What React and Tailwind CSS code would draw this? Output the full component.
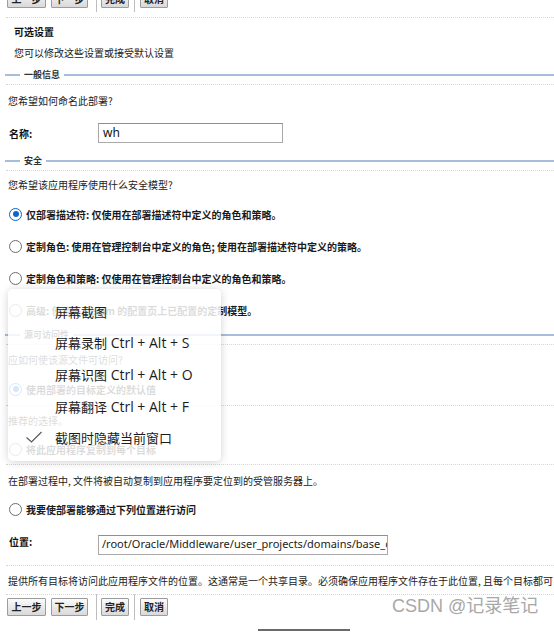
import React from "react";

const Dotted = () => (
  <div className="h-px ml-[6px] border-t border-dotted border-[#d6d6d6]" />
);

const Section = ({ title }) => (
  <div className="h-[18px] flex items-center">
    <div className="ml-[5px] w-[15px] h-[2px] bg-[#a7bddb]" />
    <span className="mx-[4px] text-[9px] font-bold text-[#333]">{title}</span>
    <div className="flex-1 h-[2px] bg-[#a7bddb]" />
  </div>
);

const Radio = ({ checked }) =>
  checked ? (
    <span className="w-[13px] h-[13px] rounded-full border-[1.5px] border-[#0a64d2] bg-white flex items-center justify-center shrink-0">
      <span className="w-[6px] h-[6px] rounded-full bg-[#0a64d2]" />
    </span>
  ) : (
    <span className="w-[13px] h-[13px] rounded-full border-[1.5px] border-[#6e6e6e] bg-white shrink-0" />
  );

const RadioRow = ({ h, checked, children }) => (
  <div className={`${h} flex items-center pl-[9px]`}>
    <Radio checked={checked} />
    <span className="ml-[4px] text-[10px] font-bold text-[#1a1a1a]">{children}</span>
  </div>
);

const Btn = ({ w, children }) => (
  <button className={`${w} h-[18px] border border-[#9c9c9c] rounded-[1px] bg-gradient-to-b from-[#fbfbfb] to-[#d9d9d9] text-[10px] font-bold text-[#222] flex items-center justify-center leading-none`}>
    {children}
  </button>
);

const Buttons = ({ cls }) => (
  <div className={`${cls} flex items-center pl-[7px]`}>
    <Btn w="w-[39px]">上一步</Btn>
    <div className="w-[5px]" />
    <Btn w="w-[37px]">下一步</Btn>
    <div className="w-[8px]" />
    <div className="w-[1px] h-[26px] bg-[#bdbdbd]" />
    <div className="w-[4px]" />
    <Btn w="w-[28px]">完成</Btn>
    <div className="w-[5px]" />
    <div className="w-[1px] h-[26px] bg-[#bdbdbd]" />
    <div className="w-[5px]" />
    <Btn w="w-[28px]">取消</Btn>
  </div>
);

const Text = ({ h, pl = "pl-[8px]", bold, children }) => (
  <div className={`${h} ${pl} flex items-center text-[10px] ${bold ? "font-bold text-[#111]" : "text-[#222]"}`}>
    {children}
  </div>
);

const MenuItem = ({ top, cjk, keys }) => (
  <div className={`absolute left-[47px] ${top} leading-[20px] flex items-baseline`}>
    <span className="text-[13px]">{cjk}</span>
    {keys && (
      <span className="text-[14px] font-['Open_Sans',sans-serif] whitespace-pre">{" " + keys}</span>
    )}
  </div>
);

export default function App() {
  return (
    <div className="relative w-[554px] h-[632px] overflow-hidden bg-white whitespace-nowrap font-['Noto_Sans_CJK_SC','Noto_Sans',sans-serif]">
      <Buttons cls="h-[18px] -mt-[10px]" />
      <div className="h-[9px]" />
      <Dotted />
      <Text h="h-[26px]" pl="pl-[14px]" bold>可选设置</Text>
      <Text h="h-[16px]" pl="pl-[14px]">您可以修改这些设置或接受默认设置</Text>
      <div className="h-[6px]" />
      <Section title="一般信息" />
      <Dotted />
      <Text h="h-[30px]">您希望如何命名此部署?</Text>
      <div className="h-[36px] flex items-center pl-[9px]">
        <span className="w-[89px] text-[10px] font-bold text-[#111]">名称:</span>
        <div className="w-[185px] h-[20px] border border-[#a9a9a9] border-t-[#8f8f8f] bg-white flex items-center pl-[4px] text-[12px] text-[#111] font-['Noto_Sans',sans-serif]">
          wh
        </div>
      </div>
      <div className="h-px" />
      <Section title="安全" />
      <Dotted />
      <Text h="h-[27px]">您希望该应用程序使用什么安全模型?</Text>
      <RadioRow h="h-[32px]" checked>仅部署描述符: 仅使用在部署描述符中定义的角色和策略。</RadioRow>
      <RadioRow h="h-[32px]">定制角色: 使用在管理控制台中定义的角色; 使用在部署描述符中定义的策略。</RadioRow>
      <RadioRow h="h-[32px]">定制角色和策略: 仅使用在管理控制台中定义的角色和策略。</RadioRow>
      <RadioRow h="h-[32px]">高级: 使用在 Realm 的配置页上已配置的定制模型。</RadioRow>
      <Section title="源可访问性" />
      <Dotted />
      <Text h="h-[28px]">应如何使该源文件可访问?</Text>
      <RadioRow h="h-[32px]" checked>使用部署的目标定义的默认值</RadioRow>
      <Dotted />
      <Text h="h-[28px]">推荐的选择。</Text>
      <RadioRow h="h-[30px]">将此应用程序复制到每个目标</RadioRow>
      <Dotted />
      <Text h="h-[30px]">在部署过程中, 文件将被自动复制到应用程序要定位到的受管服务器上。</Text>
      <RadioRow h="h-[28px]">我要使部署能够通过下列位置进行访问</RadioRow>
      <div className="h-[42px] flex items-center pl-[9px]">
        <span className="w-[89px] -mt-[6px] text-[10px] font-bold text-[#111]">位置:</span>
        <div className="w-[290px] h-[20px] mt-[1px] border border-[#a9a9a9] border-t-[#8f8f8f] bg-white flex items-center pl-[3px] overflow-hidden text-[11px] text-[#222] font-['Noto_Sans',sans-serif]">
          /root/Oracle/Middleware/user_projects/domains/base_domain
        </div>
      </div>
      <Dotted />
      <Text h="h-[28px]">提供所有目标将访问此应用程序文件的位置。这通常是一个共享目录。必须确保应用程序文件存在于此位置, 且每个目标都可以访问此位置。</Text>
      <Dotted />
      <Buttons cls="h-[24px]" />
      <div className="mt-[10px] ml-[258px] w-[92px] h-[2px] bg-[#6a6a6a]" />

      {/* watermark */}
      <div className="absolute left-[392px] top-[594px] text-[18px] leading-[24px] text-[#a8a8a8] font-['Liberation_Sans','Noto_Sans_CJK_SC',sans-serif]">
        CSDN @记录笔记
      </div>

      {/* context menu overlay */}
      <div className="absolute left-[8px] top-[289px] w-[213px] h-[172px] rounded-[5px] bg-white/[0.84] shadow-[0_1px_8px_rgba(0,0,0,0.18)] text-[#1c1c1c]">
        <MenuItem top="top-[13px]" cjk="屏幕截图" />
        <MenuItem top="top-[44px]" cjk="屏幕录制" keys="Ctrl + Alt + S" />
        <MenuItem top="top-[76px]" cjk="屏幕识图" keys="Ctrl + Alt + O" />
        <MenuItem top="top-[108px]" cjk="屏幕翻译" keys="Ctrl + Alt + F" />
        <svg className="absolute left-[17px] top-[141px]" width="18" height="14" viewBox="0 0 18 14">
          <path d="M1.5 7.5 L6.5 12 L16.5 2" fill="none" stroke="#555" strokeWidth="1.1" />
        </svg>
        <MenuItem top="top-[139px]" cjk="截图时隐藏当前窗口" />
      </div>
    </div>
  );
}
